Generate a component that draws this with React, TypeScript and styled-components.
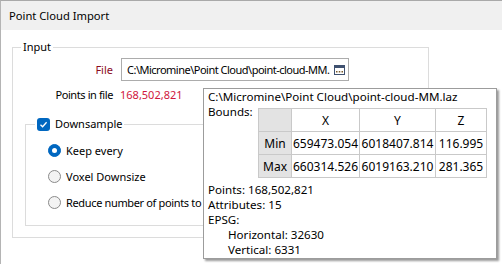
import React from "react";
import styled, { createGlobalStyle } from "styled-components";

const Global = createGlobalStyle`
  html, body { margin: 0; padding: 0; background: #ffffff; }
  body {
    font-family: "Noto Sans", "Segoe UI", sans-serif;
    font-size: 11px;
    color: #000000;
  }
  * { box-sizing: border-box; }
`;

const Window = styled.div`
  position: relative;
  width: 502px;
  height: 264px;
  overflow: hidden;
  display: flex;
  flex-direction: column;
  background: #ffffff;
  border-top: 1px solid #a9a9a9;
  border-left: 1px solid #b4b4b4;
`;

const TitleBar = styled.div`
  flex-shrink: 0;
  height: 29px;
  padding-left: 8px;
  display: flex;
  align-items: center;
  background: #f0f0f0;
  line-height: 15px;
  font-size: 11.2px;
`;

const Body = styled.div`
  flex: 1;
  padding: 10px 0 0 11px;
`;

const GroupBox = styled.fieldset<{ $w: number; $h: number }>`
  margin: 0;
  padding: 0;
  min-width: 0;
  width: ${(p) => p.$w}px;
  height: ${(p) => p.$h}px;
  border: 1px solid #dcdcdc;
`;

const Legend = styled.legend<{ $ml: number }>`
  margin-left: ${(p) => p.$ml}px;
  padding: 0 2px;
  line-height: 14px;
  height: 14px;
  display: flex;
  align-items: center;
  gap: 5px;
`;

const FormGrid = styled.div`
  display: grid;
  grid-template-columns: 100px 228px;
  column-gap: 8px;
  row-gap: 6px;
  padding-top: 4px;
  align-items: center;
`;

const FieldLabel = styled.span<{ $red?: boolean; $ls?: number }>`
  text-align: right;
  line-height: 15px;
  white-space: nowrap;
  letter-spacing: ${(p) => p.$ls ?? 0}px;
  color: ${(p) => (p.$red ? "#8b0a1e" : "#000000")};
`;

const FileBox = styled.div`
  height: 23px;
  display: flex;
  align-items: center;
  border: 1px solid #acacac;
  padding: 0 3px 0 5px;
  gap: 3px;
`;

const FileText = styled.span`
  flex: 1;
  white-space: nowrap;
  overflow: hidden;
  line-height: 15px;
  letter-spacing: -0.5px;
`;

const Count = styled.span`
  color: #d0163c;
  line-height: 15px;
  margin-left: -1px;
`;

const SubGroup = styled.div`
  margin: 15px 0 0 12px;
`;

const CheckBox = styled.span`
  width: 13px;
  height: 13px;
  border-radius: 3px;
  background: #0067c0;
  display: inline-flex;
  align-items: center;
  justify-content: center;
`;

const RadioList = styled.div`
  display: flex;
  flex-direction: column;
  gap: 11px;
  padding: 12px 0 0 22px;
`;

const RadioRow = styled.label<{ $ls?: number }>`
  display: flex;
  align-items: center;
  gap: 5px;
  line-height: 15px;
  height: 15px;
  white-space: nowrap;
  letter-spacing: ${(p) => p.$ls ?? 0}px;
`;

const RadioDot = styled.span<{ $on?: boolean }>`
  width: 13px;
  height: 13px;
  border-radius: 50%;
  flex-shrink: 0;
  display: inline-flex;
  align-items: center;
  justify-content: center;
  background: ${(p) => (p.$on ? "#0067c0" : "#f3f3f3")};
  border: 1px solid ${(p) => (p.$on ? "#0067c0" : "#8a8a8a")};
  &::after {
    content: "";
    display: ${(p) => (p.$on ? "block" : "none")};
    width: 5px;
    height: 5px;
    border-radius: 50%;
    background: #ffffff;
  }
`;

const Tooltip = styled.div`
  position: absolute;
  left: 202px;
  top: 87px;
  width: 294px;
  height: 171px;
  background: #ffffff;
  border: 1px solid #9c9c9c;
  box-shadow: 2px 2px 2px rgba(0, 0, 0, 0.4);
  padding: 0 4px;
  line-height: 15px;
  font-size: 11.6px;
`;

const PathLine = styled.div`
  white-space: nowrap;
`;

const BoundsRow = styled.div`
  display: grid;
  grid-template-columns: 50px auto;
  align-items: start;
`;

const BoundsTable = styled.table`
  margin-top: 4px;
  border-collapse: collapse;
  table-layout: fixed;
  width: 228px;
  font-size: 12px;
`;

const Cell = styled.td<{ $head?: boolean }>`
  height: 23px;
  padding: 0;
  text-align: center;
  border: 1px solid #c9c9c9;
  background: ${(p) => (p.$head ? "#e3e3e3" : "#ffffff")};
  line-height: 15px;
  white-space: nowrap;
`;

const InfoList = styled.div`
  margin-top: 4px;
`;

const InfoLine = styled.div<{ $indent?: boolean }>`
  padding-left: ${(p) => (p.$indent ? 20 : 0)}px;
  line-height: 15px;
  height: 15px;
  white-space: nowrap;
`;

const BrowseIcon = () => (
  <svg width="11" height="10" viewBox="0 0 11 10">
    <rect x="0.5" y="0.5" width="10" height="9" fill="#ffffff" stroke="#3f5170" />
    <rect x="1" y="1" width="9" height="2" fill="#3f5170" />
    <rect x="2" y="6" width="1.5" height="1.5" fill="#7a5a2a" />
    <rect x="4.75" y="6" width="1.5" height="1.5" fill="#7a5a2a" />
    <rect x="7.5" y="6" width="1.5" height="1.5" fill="#7a5a2a" />
  </svg>
);

const CheckMark = () => (
  <svg width="9" height="9" viewBox="0 0 9 9">
    <path d="M1.5 4.8 L3.6 6.8 L7.6 2.2" fill="none" stroke="#ffffff" strokeWidth="1.3" />
  </svg>
);

const rows = [
  { name: "Min", x: "659473.054", y: "6018407.814", z: "116.995" },
  { name: "Max", x: "660314.526", y: "6019163.210", z: "281.365" },
];

export default function App() {
  return (
    <>
      <Global />
      <Window>
        <TitleBar>Point Cloud Import</TitleBar>
        <Body>
          <GroupBox $w={417} $h={198}>
            <Legend $ml={8}>Input</Legend>
            <FormGrid>
              <FieldLabel $red>File</FieldLabel>
              <FileBox>
                <FileText>C:\Micromine\Point Cloud\point-cloud-MM.</FileText>
                <BrowseIcon />
              </FileBox>
              <FieldLabel $ls={-0.4}>Points in file</FieldLabel>
              <Count>168,502,821</Count>
            </FormGrid>
            <SubGroup>
              <GroupBox $w={391} $h={109}>
                <Legend $ml={9}>
                  <CheckBox>
                    <CheckMark />
                  </CheckBox>
                  Downsample
                </Legend>
                <RadioList>
                  <RadioRow>
                    <RadioDot $on />
                    Keep every
                  </RadioRow>
                  <RadioRow>
                    <RadioDot />
                    Voxel Downsize
                  </RadioRow>
                  <RadioRow $ls={-0.35}>
                    <RadioDot />
                    Reduce number of points to
                  </RadioRow>
                </RadioList>
              </GroupBox>
            </SubGroup>
          </GroupBox>
        </Body>
        <Tooltip>
          <PathLine>C:\Micromine\Point Cloud\point-cloud-MM.laz</PathLine>
          <BoundsRow>
            <span>Bounds:</span>
            <BoundsTable>
              <colgroup>
                <col style={{ width: 33 }} />
                <col style={{ width: 68 }} />
                <col style={{ width: 76 }} />
                <col style={{ width: 51 }} />
              </colgroup>
              <tbody>
                <tr>
                  <Cell $head />
                  <Cell>X</Cell>
                  <Cell>Y</Cell>
                  <Cell>Z</Cell>
                </tr>
                {rows.map((r) => (
                  <tr key={r.name}>
                    <Cell $head>{r.name}</Cell>
                    <Cell>{r.x}</Cell>
                    <Cell>{r.y}</Cell>
                    <Cell>{r.z}</Cell>
                  </tr>
                ))}
              </tbody>
            </BoundsTable>
          </BoundsRow>
          <InfoList>
            <InfoLine>Points: 168,502,821</InfoLine>
            <InfoLine>Attributes: 15</InfoLine>
            <InfoLine>EPSG:</InfoLine>
            <InfoLine $indent>Horizontal: 32630</InfoLine>
            <InfoLine $indent>Vertical: 6331</InfoLine>
          </InfoList>
        </Tooltip>
      </Window>
    </>
  );
}
